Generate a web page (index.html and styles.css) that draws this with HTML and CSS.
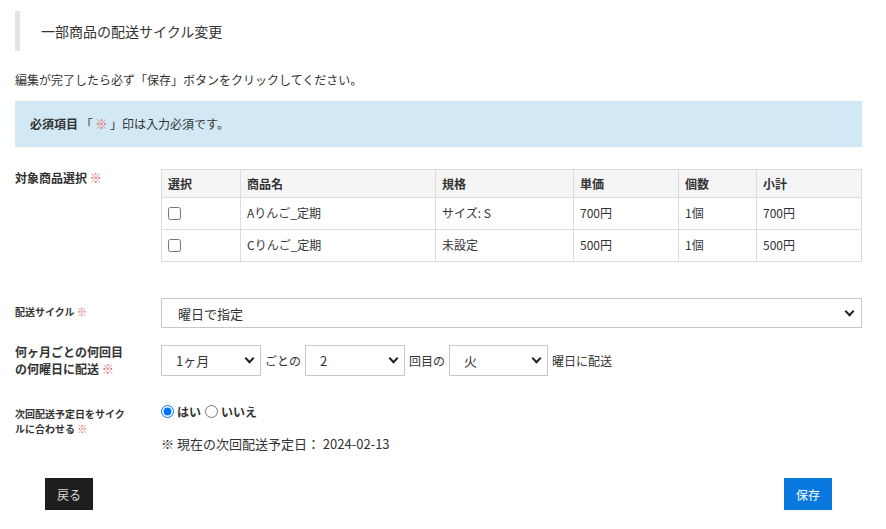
FILE: index.html
```html
<!DOCTYPE html>
<html lang="ja">
<head>
<meta charset="utf-8">
<title>一部商品の配送サイクル変更</title>
<link rel="stylesheet" href="styles.css">
</head>
<body>
<div class="page">
  <h1 class="title">一部商品の配送サイクル変更</h1>
  <p class="lead">編集が完了したら必ず「保存」ボタンをクリックしてください。</p>
  <div class="notice"><strong>必須項目</strong> 「 <span class="req">※</span> 」印は入力必須です。</div>

  <div class="row row-items">
    <div class="label l12">対象商品選択 <span class="req">※</span></div>
    <div class="field">
      <table class="items">
        <colgroup>
          <col style="width:79px"><col style="width:195px"><col style="width:138px"><col style="width:105px"><col style="width:78px"><col>
        </colgroup>
        <thead>
          <tr><th>選択</th><th>商品名</th><th>規格</th><th>単価</th><th>個数</th><th>小計</th></tr>
        </thead>
        <tbody>
          <tr><td><input type="checkbox" class="chk"></td><td>Aりんご_定期</td><td>サイズ: S</td><td>700円</td><td>1個</td><td>700円</td></tr>
          <tr><td><input type="checkbox" class="chk"></td><td>Cりんご_定期</td><td>未設定</td><td>500円</td><td>1個</td><td>500円</td></tr>
        </tbody>
      </table>
    </div>
  </div>

  <div class="row row-cycle">
    <div class="label l10b">配送サイクル <span class="req">※</span></div>
    <div class="field">
      <span class="sel sel-full"><select><option>曜日で指定</option></select></span>
    </div>
  </div>

  <div class="row row-week">
    <div class="label l13">何ヶ月ごとの何回目<br>の何曜日に配送 <span class="req">※</span></div>
    <div class="field inline">
      <span class="sel sel-s"><select><option>1ヶ月</option></select></span>
      <span class="txt">ごとの</span>
      <span class="sel sel-s"><select><option>2</option></select></span>
      <span class="txt">回目の</span>
      <span class="sel sel-s3"><select><option>火</option></select></span>
      <span class="txt">曜日に配送</span>
    </div>
  </div>

  <div class="row row-next">
    <div class="label l10">次回配送予定日をサイク<br>ルに合わせる <span class="req">※</span></div>
    <div class="field">
      <div class="radios">
        <label class="radio"><input type="radio" name="sync" checked><b>はい</b></label>
        <label class="radio"><input type="radio" name="sync"><b>いいえ</b></label>
      </div>
      <p class="nextdate">※ 現在の次回配送予定日： 2024-02-13</p>
    </div>
  </div>

  <div class="actions">
    <button class="btn btn-back">戻る</button>
    <button class="btn btn-save">保存</button>
  </div>
</div>
</body>
</html>
```

FILE: styles.css
```css
* { box-sizing: border-box; }
html, body { margin: 0; padding: 0; background: #fff; }
body {
  font-family: "Noto Sans CJK JP", "Noto Sans", "Liberation Sans", sans-serif;
  color: #333;
  font-size: 12px;
}
.page { padding: 11px 24px 0 15px; width: 886px; }

.title {
  margin: 0;
  height: 40px;
  line-height: 40px;
  border-left: 5px solid #e4e4e4;
  padding-left: 21px;
  font-size: 14px;
  font-weight: normal;
  color: #333;
}
.lead { margin: 20px 0 0; font-size: 12px; line-height: 18px; }
.notice {
  margin-top: 12px;
  height: 46px;
  line-height: 46px;
  padding-left: 15px;
  background: #d2e9f5;
  font-size: 12px;
}
.notice strong { font-weight: bold; }
.req { color: #e05a5a; font-weight: normal; }

.row { display: grid; grid-template-columns: 146px 1fr; }
.label { font-weight: bold; color: #333; }
.l12 { font-size: 12px; line-height: 18px; padding-top: 0px; }
.l10b { font-size: 10px; line-height: 15px; padding-top: 6px; }
.l13 { font-size: 12px; line-height: 17px; padding-top: 0px; }
.l10 { font-size: 10px; line-height: 15px; padding-top: 3px; }

.row-items { margin-top: 22px; }
.items { width: 100%; border-collapse: collapse; table-layout: fixed; font-size: 12px; }
.items th, .items td {
  border: 1px solid #dcdcdc;
  text-align: left;
  padding: 0 6px;
  vertical-align: middle;
}
.items th { height: 28px; background: #f5f5f5; font-weight: bold; color: #333; }
.items td { height: 32px; font-weight: normal; padding-bottom: 3px; }
.chk { margin: 0; width: 13px; height: 13px; vertical-align: middle; }
.items td:first-child { padding-bottom: 4px; }

.row-cycle { margin-top: 36px; }
.sel { position: relative; display: inline-block; }
.sel select {
  appearance: none;
  -webkit-appearance: none;
  width: 100%;
  border: 1px solid #c8c8c8;
  border-radius: 0;
  background: #fff;
  font-family: inherit;
  font-size: 13px;
  color: #333;
  margin: 0;
}
.sel::after {
  content: "";
  position: absolute;
  width: 5px;
  height: 5px;
  border-right: 2px solid #222;
  border-bottom: 2px solid #222;
  transform: rotate(45deg);
  top: 50%;
  margin-top: -5px;
  pointer-events: none;
}
.sel-full { display: block; }
.sel-full select { height: 30px; padding: 0 16px; }
.sel-full::after { right: 9px; }
.sel-s, .sel-s3 { width: 100px; }
.sel-s3 { width: 99px; }
.sel-s select, .sel-s3 select { height: 31px; padding: 0 14px; }
.sel-s::after, .sel-s3::after { right: 8px; }

.row-week { margin-top: 15px; }
.inline { display: flex; align-items: center; gap: 4px; }
.txt { font-size: 12px; }

.row-next { margin-top: 26px; }
.radios { display: flex; align-items: center; height: 16px; }
.radio { display: inline-flex; align-items: center; font-size: 12px; margin-right: 4px; }
.radio input { margin: 0 3px 0 0; width: 13px; height: 13px; }
.radio b { font-weight: bold; }
.nextdate { margin: 16px 0 0; font-size: 13px; line-height: 17px; }

.actions {
  display: flex;
  justify-content: space-between;
  padding: 0 30px;
  margin-top: 26px;
}
.btn {
  width: 48px;
  height: 32px;
  border: 0;
  border-radius: 0;
  font-family: inherit;
  font-size: 12px;
  color: #fff;
  padding: 0;
}
.btn-back { background: #1e1e1e; color: #ddd; }
.btn-save { background: #0a79df; }
```
